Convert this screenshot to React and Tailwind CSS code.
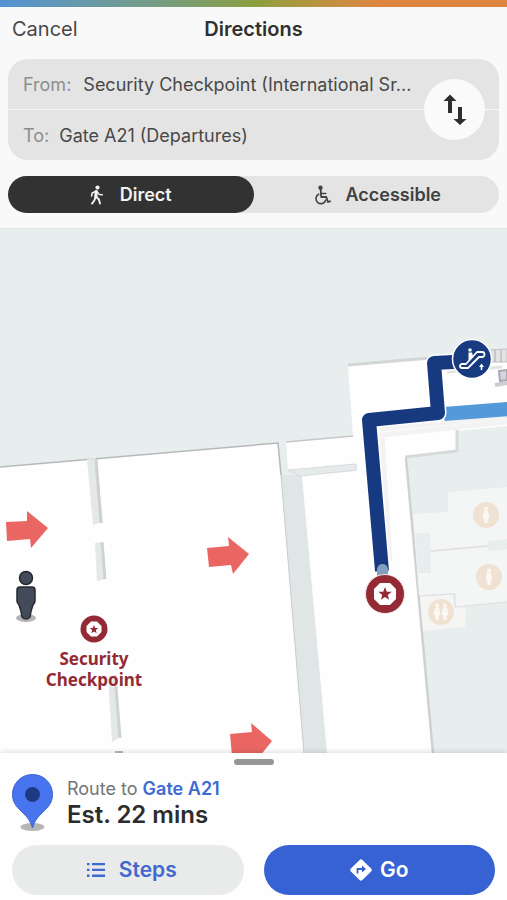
const ARROWS = [
  "M6 521 L27 520 L27 510 L48 527 L31 547 L30 538 L7 540 Z",
  "M207 547 L229 545 L228 536 L249 553 L233 573 L231 564 L209 566 Z",
  "M230 733 L252 731 L251 722 L272 740 L256 760 L255 754 L232 755 Z",
];

const STAR =
  "M0 -7 L1.8 -2.3 L6.7 -2.2 L2.8 0.9 L4.1 5.7 L0 3 L-4.1 5.7 L-2.8 0.9 L-6.7 -2.2 L-1.8 -2.3 Z";

function WalkIcon() {
  return (
    <svg className="h-5 w-[14px]" viewBox="0 0 14 20" fill="none" stroke="currentColor" strokeLinecap="round" strokeLinejoin="round" aria-hidden="true">
      <circle cx="7.500" cy="2.600" r="2.100" fill="currentColor" stroke="none" />
      <path d="M6.200 6.600 L5.800 12" strokeWidth="3.200" />
      <path d="M5.500 6.300 L2.200 8 L1.500 11 M7 6.500 L9.200 9.400 L12.300 9.800" strokeWidth="1.500" />
      <path d="M5.400 12 L4.500 15.200 L2 18.600 M6.400 12 L8.900 14.500 L10 18.600" strokeWidth="1.900" />
    </svg>
  );
}

function WheelchairIcon() {
  return (
    <svg className="h-5 w-4" viewBox="0 0 16 20" fill="none" stroke="currentColor" strokeLinecap="round" strokeLinejoin="round" aria-hidden="true">
      <circle cx="5.500" cy="2.700" r="2.200" fill="currentColor" stroke="none" />
      <path d="M5.700 5 L6.200 12 H11.300 L13 17 L15 16.300" strokeWidth="1.800" />
      <path d="M6 8.500 H10.800" strokeWidth="1.500" />
      <path d="M3.700 9.200 A5 5 0 1 0 10.800 15" strokeWidth="1.600" />
    </svg>
  );
}

function Restroom({ x, y, pair }) {
  return (
    <g transform={`translate(${x} ${y})`}>
      <circle r="13" fill="#efe2d2" />
      {(pair ? [-4, 4] : [0]).map((dx) => (
        <g key={dx} transform={`translate(${dx} 0)`} fill="#fbf8f4">
          <circle cy="-6.500" r="2" />
          <path d="M-2 -4.500 H2 L3.500 3 H2 L1.500 8 H-1.500 L-2 3 H-3.500 Z" />
        </g>
      ))}
    </g>
  );
}

function TerminalMap() {
  return (
    <svg
      className="block h-full w-full"
      viewBox="0 228 507 524"
      preserveAspectRatio="xMidYMid slice"
      role="img"
      aria-label="Terminal map"
    >
      <rect x="-500" y="228" width="1500" height="524" fill="#e8eded" />

      {/* halls */}
      <path d="M-500 502 L0 466 L278 442 L304 752 H-500 Z" fill="#fefefe" />
      <path d="M0 466 L278 442 L281 474" fill="none" stroke="#b5b9bb" strokeWidth="1.500" />
      <path d="M281 474 L302 474 L327 752 L304 752 Z" fill="#e0e5e6" />
      <path d="M281 474 L304 752" stroke="#c9cdce" />
      <path d="M286 441 L353 435 L348 365 L507 351 V425 L458 430 V448 L405 457 L432 752 H327 L302 475 L357 470 V463 L288 469 Z" fill="#fefefe" />
      <path d="M286 441 L353 435" stroke="#c4c8ca" strokeWidth="1.500" />
      <path d="M288 469 L356 463 V469 L300 475 Z" fill="#e7eaea" stroke="#d9dcdd" />
      <path d="M348 364 L430 357" stroke="#d3d6d7" strokeWidth="3" />
      <path d="M406 457 L433 752" stroke="#cfd2d3" strokeWidth="2.500" />
      <path d="M405 456 L457 450 V429" fill="none" stroke="#d7dadb" strokeWidth="3" />
      <path d="M380 428 L507 416 V421 L382 434 L390 560" fill="none" stroke="#f3f3f3" strokeWidth="5" />
      <path d="M447 371 L502 366" stroke="#e2e4e4" strokeWidth="3" />

      {/* partitions */}
      <path d="M87 458 L96 457 L103 521 L93 524 Z" fill="#e4e8e8" />
      <path d="M96 458 L101 522" stroke="#cdd1d2" strokeWidth="3" />
      <path d="M95 542 L103 541 L106 578 L97 580 Z" fill="#e4e8e8" />
      <path d="M102 541 L105 578" stroke="#cfd3d4" strokeWidth="3" />
      <path d="M108 675 L115 674 L121 736 L112 741 Z" fill="#e4e8e8" />
      <path d="M115 674 L120 737" stroke="#cfd3d4" strokeWidth="3" />
      <path d="M115 751 H123" stroke="#b5b9bb" strokeWidth="2" />

      {/* service rooms */}
      <path d="M448 491 L507 486 V538 L488 540 V550 L507 548 V601 L456 606 V592 L419 594 L413 513 L448 511 Z" fill="#f4f5f5" />
      <path d="M415 532 H430 L431 572 H418 Z" fill="#e8eded" />
      <path d="M431 550 L488 545" stroke="#dedede" strokeWidth="1.500" />
      <path d="M420 595 L454 593 L455 606 L466 607 L465 626 L423 630 Z" fill="#f5f5f4" />
      <path d="M420 595 L454 593 L455 606 L507 601" fill="none" stroke="#dcdfe0" />
      <Restroom x={486} y={514} />
      <Restroom x={489} y={576} />
      <Restroom x={441} y={611} pair />

      {/* escalator landings */}
      <path d="M488 349 L507 348 V361 H490 Z" fill="#e3e3e4" stroke="#bfc0c2" />
      <path d="M495 349 V361 M501 349 V361" stroke="#aaacae" />
      <path d="M499 370 L507 369 V379 L500 380 Z" fill="#d4d5de" stroke="#a8a9b0" strokeWidth="2" />
      <path d="M495 384 L507 382" stroke="#cccdd0" strokeWidth="4" />

      {/* route */}
      <path d="M444 413 L560 404" stroke="#559ad8" strokeWidth="14" />
      <path d="M472 360 L434 362 L438 412 L369 419 L382 570" fill="none" stroke="#ffffff" strokeWidth="17" strokeLinejoin="round" />
      <path d="M472 360 L434 362 L438 412 L369 419 L382 570" fill="none" stroke="#16397f" strokeWidth="14" strokeLinejoin="round" />
      <path d="M377 576 V568 Q378 563 382.500 563 Q387 563 388 568 V576 Z" fill="#829fc0" />

      {/* escalator marker */}
      <g transform="translate(472 358)">
        <circle r="19.500" fill="#173a80" stroke="#ffffff" strokeWidth="1.500" />
        <path d="M-10 5 H-6 L5 -7 H10 A2.500 2.500 0 0 1 10 -2 H7 L-4 9 H-10 A2 2 0 0 1 -10 5 Z" fill="none" stroke="#ffffff" strokeWidth="1.800" strokeLinejoin="round" />
        <circle cx="-2" cy="-9" r="1.800" fill="#ffffff" />
        <path d="M-3.500 -6.500 H0 L1 -3 L-3.500 2 Z" fill="#ffffff" />
        <path d="M9.500 4.500 L12 8 H10.300 V11 H8.700 V8 H7 Z" fill="#ffffff" />
      </g>

      {/* start marker */}
      <g transform="translate(385 593)">
        <circle r="19.500" fill="#932a35" stroke="#f3e6e7" />
        <path d="M-5 -11 H5 L11 -5 V5 L5 11 H-5 L-11 5 V-5 Z" fill="#ffffff" />
        <path d={STAR} fill="#932a35" />
      </g>

      {ARROWS.map((d) => (
        <path key={d} d={d} fill="#e96663" />
      ))}

      {/* person */}
      <ellipse cx="26" cy="617" rx="10" ry="4" fill="#b4b4b4" />
      <circle cx="26" cy="577" r="6.500" fill="#434b5b" stroke="#25292f" strokeWidth="1.500" />
      <path d="M20 586 H32 Q35 586 35 589 V600 Q35 602 33 604 Q31 609 30 616 Q29 618 26 618 Q23 618 22 616 Q21 609 19 604 Q17 602 17 600 V589 Q17 586 20 586 Z" fill="#434b5b" stroke="#25292f" strokeWidth="1.500" />

      {/* checkpoint */}
      <circle cx="94" cy="628" r="13.500" fill="#932a35" />
      <path d="M91 620.500 H97 L101.500 625 V631 L97 635.500 H91 L86.500 631 V625 Z" fill="#ffffff" />
      <path d={STAR} transform="translate(94 628.500) scale(0.65)" fill="#932a35" />
      <text
        className="font-['Noto_Sans',sans-serif] text-[17px] font-bold"
        textAnchor="middle"
        fill="#932a35"
        stroke="#ffffff"
        strokeWidth="1"
        paintOrder="stroke"
      >
        <tspan x="94" y="664">Security</tspan>
        <tspan x="94" y="685">Checkpoint</tspan>
      </text>
    </svg>
  );
}

export default function App() {
  return (
    <div className="flex min-h-screen flex-col bg-[#f9f9f9] font-[Inter,sans-serif] text-[#303030]">
      <div className="h-[7px] bg-linear-to-r from-[#5592d3] via-[#8b9f3e] via-50% to-[#df8542] to-75%" />

      <header className="flex flex-col gap-4 border-b border-[#dfe3e3] px-2 pb-[15px]">
        <div className="-mb-1 grid h-10 grid-cols-[1fr_auto_1fr] items-center px-1 pt-1">
          <button type="button" className="justify-self-start text-[20px] text-[#484848]">Cancel</button>
          <h1 className="text-[20px] font-semibold">Directions</h1>
        </div>

        <form className="relative overflow-hidden rounded-[20px] bg-[#e4e4e4] text-[18px]">
          <div className="flex h-[51px] items-center gap-3 border-b border-[#f7f7f7] pl-[15px] pr-20">
            <label htmlFor="from" className="text-[#8b8e8e]">From:</label>
            <input id="from" className="min-w-0 flex-1 text-ellipsis text-[#484848] outline-none" defaultValue="Security Checkpoint (International Sr..." />
          </div>
          <div className="flex h-[50px] items-center gap-[10px] pl-[15px] pr-20">
            <label htmlFor="to" className="text-[#8b8e8e]">To:</label>
            <input id="to" className="min-w-0 flex-1 text-[#484848] outline-none" defaultValue="Gate A21 (Departures)" />
          </div>
          <button type="button" aria-label="Swap start and destination" className="absolute inset-y-0 right-[14px] my-auto flex size-[61px] items-center justify-center rounded-full bg-[#fafafa]">
            <svg className="size-8" viewBox="0 0 32 32" fill="#2e2e2e" aria-hidden="true">
              <path d="M11 0.500 L17.500 7 H13 V19 H9 V7 H4.500 Z" />
              <path d="M19 13 H23 V25 H27.500 L21 31 L14.500 25 H19 Z" />
            </svg>
          </button>
        </form>

        <div className="grid h-[37px] grid-cols-2 rounded-full bg-[#e4e4e4] text-[18px] font-semibold">
          <button type="button" aria-pressed="true" className="flex items-center justify-center gap-4 rounded-full bg-[#323232] text-[#f2f2f2]">
            <WalkIcon />
            Direct
          </button>
          <button type="button" aria-pressed="false" className="flex items-center justify-center gap-[14px] pl-1 text-[#414141]">
            <WheelchairIcon />
            Accessible
          </button>
        </div>
      </header>

      <main className="h-[524px] min-h-0 flex-auto">
        <TerminalMap />
      </main>

      <section className="relative flex flex-col bg-[#fefefe] px-3 pb-[5px] pt-[6px] shadow-[0_-1px_5px_rgba(0,0,0,0.14)]">
        <div className="h-[6px] w-10 self-center rounded-full bg-[#959796]" />
        <div className="flex h-20 items-center gap-[14px] pb-1">
          <svg className="h-[58px] w-[41px]" viewBox="0 0 41 58" aria-hidden="true">
            <ellipse cx="20.500" cy="53" rx="12" ry="4" fill="#b6b6b6" />
            <path d="M20.500 0.500 C9 0.500 0.500 9.500 0.500 20.500 C0.500 30 6 34 12 40 C17 45 18.500 48 20.500 54 C22.500 48 24 45 29 40 C35 34 40.500 30 40.500 20.500 C40.500 9.500 32 0.500 20.500 0.500 Z" fill="#4974ef" stroke="#3e65d3" />
            <circle cx="20.500" cy="20.500" r="7.500" fill="#1e3b82" />
          </svg>
          <div>
            <p className="text-[18px] leading-6 text-[#747474]">
              Route to <span className="font-semibold text-[#3d69d2]">Gate A21</span>
            </p>
            <p className="text-[24px] font-semibold leading-7 text-[#2c2c2c]">Est. 22 mins</p>
          </div>
        </div>
        <div className="grid h-[50px] grid-cols-2 gap-5 text-[21px] font-semibold">
          <button type="button" className="flex items-center justify-center gap-[14px] rounded-full bg-[#e9eaea] pl-2 text-[#3f68d0]">
            <svg className="h-[14px] w-[18px]" viewBox="0 0 18 14" fill="currentColor" aria-hidden="true">
              <path d="M0 0 H2.500 V2.300 H0 Z M0 5.800 H2.500 V8.100 H0 Z M0 11.600 H2.500 V13.900 H0 Z M5 0 H18 V2.300 H5 Z M5 5.800 H18 V8.100 H5 Z M5 11.600 H18 V13.900 H5 Z" />
            </svg>
            Steps
          </button>
          <button type="button" className="flex items-center justify-center gap-2 rounded-full bg-[#3662d3] text-white">
            <svg className="size-[22px]" viewBox="0 0 22 22" aria-hidden="true">
              <path d="M9.600 0.900 Q11 -0.500 12.400 0.900 L21.100 9.600 Q22.500 11 21.100 12.400 L12.400 21.100 Q11 22.500 9.600 21.100 L0.900 12.400 Q-0.500 11 0.900 9.600 Z" fill="#ffffff" />
              <path d="M7.500 14.500 V10 H13" fill="none" stroke="#3662d3" strokeWidth="1.800" />
              <path d="M12 6.500 L16 10 L12 13.500 Z" fill="#3662d3" />
            </svg>
            Go
          </button>
        </div>
      </section>
    </div>
  );
}
